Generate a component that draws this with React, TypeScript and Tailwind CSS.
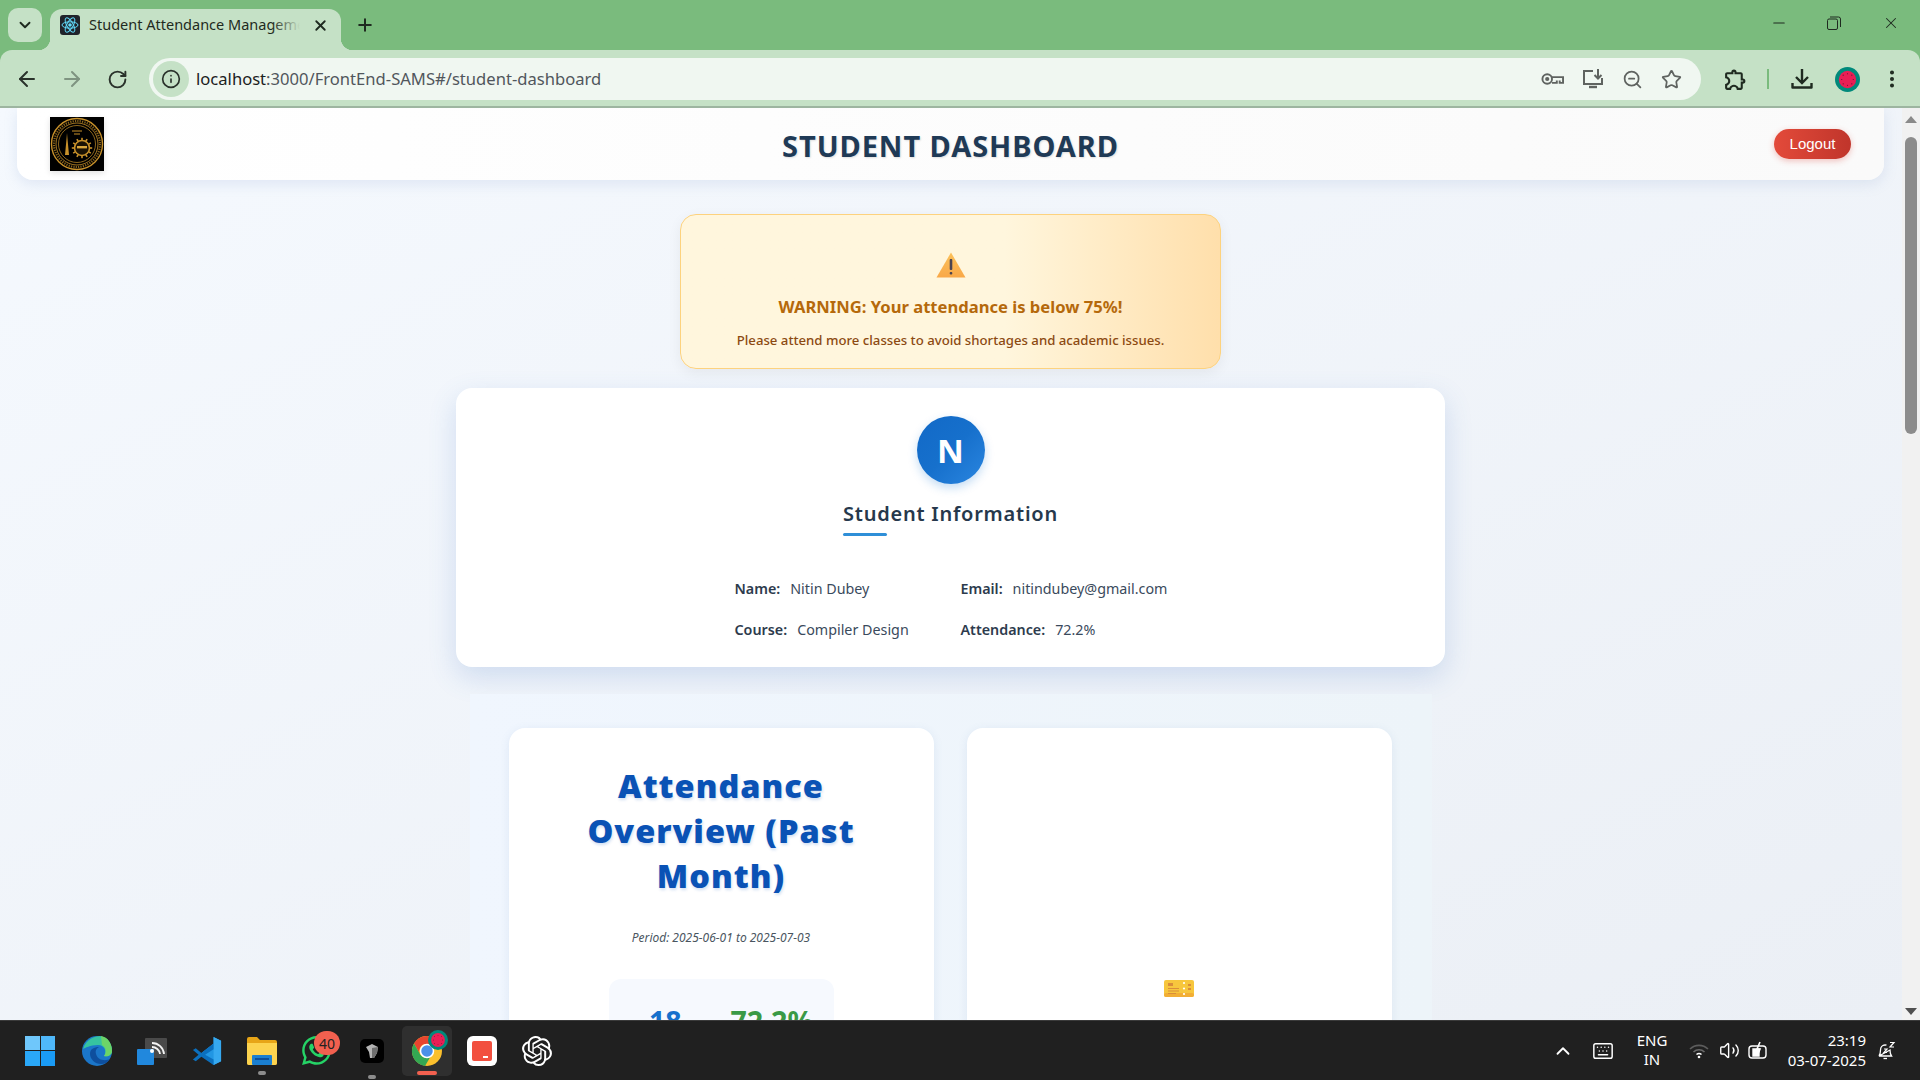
import {
  ArrowLeft,
  ArrowRight,
  ChevronDown,
  ChevronUp,
  EllipsisVertical,
  Info,
  Keyboard,
  Minus,
  Plus,
  RotateCw,
  Star,
  Volume2,
  X,
  ZoomOut,
} from "lucide-react";
import { FaWhatsapp } from "react-icons/fa";
import { MdOutlineExtension } from "react-icons/md";
import { SiOpenai } from "react-icons/si";

function ReactFavicon() {
  return (
    <svg viewBox="0 0 20 20" className="w-5 h-5 rounded-[3px] bg-[#20232a]">
      <circle cx="10" cy="10" r="1.8" fill="#61dafb" />
      <g fill="none" stroke="#61dafb" strokeWidth="1">
        <ellipse cx="10" cy="10" rx="8" ry="3.2" />
        <ellipse cx="10" cy="10" rx="8" ry="3.2" transform="rotate(60 10 10)" />
        <ellipse cx="10" cy="10" rx="8" ry="3.2" transform="rotate(120 10 10)" />
      </g>
    </svg>
  );
}

function KeyIcon() {
  return (
    <svg viewBox="0 0 24 14" className="w-[23px] h-[14px]" fill="none" stroke="#5f6360" strokeWidth="2">
      <circle cx="6.5" cy="7" r="5" />
      <circle cx="6.5" cy="7" r="1.2" fill="#5f6360" />
      <path d="M11.5 5H23V11H19.5V8.5M16.5 8.5V11H11.5" />
    </svg>
  );
}

function MonitorIcon() {
  return (
    <svg viewBox="0 0 22 22" className="w-[22px] h-[22px]" fill="none" stroke="#5f6360" strokeWidth="2">
      <path d="M11 3H2V16H20V10" />
      <path d="M7 19H15" strokeWidth="2.4" />
      <path d="M16 1V10M12.5 7L16 10.5L19.5 7" />
    </svg>
  );
}

function RestoreIcon() {
  return (
    <svg viewBox="0 0 14 14" className="w-[14px] h-[14px]" fill="none" stroke="#1f2a20" strokeWidth="1">
      <rect x="0.5" y="3" width="10" height="10.5" rx="1.5" />
      <path d="M3 1H11.5A2 2 0 0 1 13.5 3V11" />
    </svg>
  );
}

function DownloadIcon() {
  return (
    <svg viewBox="0 0 22 22" className="w-[22px] h-[22px]" fill="none" stroke="#1f2a20" strokeWidth="2.4">
      <path d="M11 1V14M5 9L11 15L17 9" />
      <path d="M1.5 15V19.5H20.5V15" strokeLinejoin="round" />
    </svg>
  );
}

function Watermelon({ size }: { size: string }) {
  return (
    <svg viewBox="0 0 26 26" className={size}>
      <circle cx="13" cy="13" r="13" fill="#00897b" />
      <circle cx="13" cy="13" r="9" fill="#e91e55" />
      <g fill="#5d1230">
        <circle cx="13" cy="7" r="0.6" />
        <circle cx="19" cy="13" r="0.6" />
        <circle cx="13" cy="19" r="0.6" />
        <circle cx="7" cy="13" r="0.6" />
        <circle cx="17.5" cy="8.5" r="0.6" />
        <circle cx="8.5" cy="8.5" r="0.6" />
        <circle cx="17.5" cy="17.5" r="0.6" />
        <circle cx="8.5" cy="17.5" r="0.6" />
      </g>
    </svg>
  );
}

function CollegeLogo() {
  const teeth = Array.from({ length: 12 }, (_, i) => i * 30);
  return (
    <svg viewBox="0 0 54 54" className="w-[54px] h-[54px] bg-black shadow-[0_2px_6px_rgba(0,0,0,0.12)]">
      <g fill="none" stroke="#c8912a">
        <ellipse cx="27" cy="27" rx="25.5" ry="25.5" strokeWidth="1.4" />
        <ellipse cx="27" cy="27" rx="21" ry="21" strokeWidth="0.8" />
        <ellipse cx="27" cy="27" rx="23" ry="23" strokeWidth="2.2" strokeDasharray="1.2 1.2" opacity="0.7" />
        <ellipse cx="27" cy="27" rx="18.5" ry="18.5" strokeWidth="1" opacity="0.7" />
      </g>
      <path d="M15 38L16.5 22L17 16L17.5 22L19 38Z" fill="#c8912a" />
      <circle cx="32" cy="31" r="7.5" fill="#1a1204" stroke="#c8912a" strokeWidth="1.6" />
      {teeth.map((deg) => (
        <rect key={deg} x="31.2" y="20.8" width="1.6" height="2.4" fill="#c8912a" transform={`rotate(${deg} 32 31)`} />
      ))}
      <rect x="27" y="29" width="10" height="2.4" fill="#d9a63c" />
      <path d="M22 14H32M24 17H30" stroke="#c8912a" strokeWidth="1" />
    </svg>
  );
}

function WarningIcon() {
  return (
    <svg viewBox="0 0 30 26" className="w-[30px] h-[26px]">
      <defs>
        <linearGradient id="warn" x1="0" y1="0" x2="0" y2="1">
          <stop offset="0" stopColor="#fbc15a" />
          <stop offset="1" stopColor="#f9a848" />
        </linearGradient>
      </defs>
      <path d="M15 0.5L29.5 25.5H0.5Z" fill="url(#warn)" />
      <rect x="13.7" y="7" width="2.6" height="11" rx="1" fill="#4a4350" />
      <rect x="13.7" y="20" width="2.6" height="2.6" rx="1" fill="#4a4350" />
    </svg>
  );
}

function TicketIcon() {
  return (
    <svg viewBox="0 0 30 17" className="w-[30px] h-[17px]">
      <path d="M2 0H28A2 2 0 0 1 30 2V15A2 2 0 0 1 28 17H2A2 2 0 0 1 0 15V2A2 2 0 0 1 2 0Z" fill="#f7c63d" />
      <rect x="0" y="13" width="30" height="4" rx="2" fill="#f2ae35" />
      <circle cx="20" cy="3" r="1.1" fill="#fff" />
      <circle cx="20" cy="8.5" r="1.1" fill="#fff" />
      <circle cx="20" cy="14" r="1.1" fill="#fff" />
      <rect x="4" y="3" width="5" height="3" fill="#d98d3a" />
      <path d="M4 8.5H15M4 11H15M4 13.5H12" stroke="#d98d3a" strokeWidth="1" />
      <path d="M24 5H27M24 9H27" stroke="#d98d3a" strokeWidth="2" />
    </svg>
  );
}

function TaskbarIcons() {
  return (
    <div className="flex items-center pl-[11px] h-full">
      <div className="w-[58px] flex justify-center">
        <div className="grid grid-cols-2 gap-[1px] w-[30px] h-[30px]">
          <div className="bg-[#6fc7fb]" />
          <div className="bg-[#4fb8fa]" />
          <div className="bg-[#2aa8f8]" />
          <div className="bg-[#1a9bf5]" />
        </div>
      </div>
      <div className="w-[55px] flex justify-center">
        <svg viewBox="0 0 32 32" className="w-8 h-8">
          <circle cx="16" cy="16" r="15" fill="#1b76c9" />
          <path d="M2 14C5 4 14 1 19 1C27 2 31 9 31 16C31 20 27 22 23 21C26 17 24 10 17 10C9 10 4 13 2 14Z" fill="#36c3a0" />
          <path d="M20 1C27 2 31 9 31 16C31 20 27 22 23 21C26 17 25 12 21 10Z" fill="#6cd468" />
          <path d="M9 19C9 24 14 29 20 29C24 29 27 27 29 24C25 26 17 26 15 19C14 15 16 13 18 12C13 12 9 14 9 19Z" fill="#0e4f9e" />
        </svg>
      </div>
      <div className="w-[55px] flex justify-center">
        <svg viewBox="0 0 30 30" className="w-[30px] h-[30px]">
          <rect x="8" y="2" width="22" height="20" rx="1" fill="#4a4a4a" />
          <path d="M15 7A12 12 0 0 1 27 18M15 11A8 8 0 0 1 23 18" fill="none" stroke="#f4f4f4" strokeWidth="1.8" />
          <rect x="0" y="13" width="17" height="16" rx="1" fill="#2188dd" />
          <circle cx="15" cy="15" r="2" fill="#fff" />
        </svg>
      </div>
      <div className="w-[55px] flex justify-center">
        <svg viewBox="0 0 32 32" className="w-[30px] h-[30px]">
          <path d="M23 1L31 5V27L23 31L10 18L23 8Z" fill="#2196e3" />
          <path d="M23 1V31L31 27V5Z" fill="#36a9f0" />
          <path d="M23 8L10 18L4 13L1 15L7 20L1 25L4 27L10 22L23 31V25L14 20L23 14Z" fill="#0b6fbd" />
        </svg>
      </div>
      <div className="w-[55px] flex justify-center relative">
        <svg viewBox="0 0 32 32" className="w-[32px] h-[32px]">
          <path d="M1 4A2 2 0 0 1 3 2H11L14 5H29A2 2 0 0 1 31 7V28A2 2 0 0 1 29 30H3A2 2 0 0 1 1 28Z" fill="#e7a517" />
          <path d="M1 8H31V28A2 2 0 0 1 29 30H3A2 2 0 0 1 1 28Z" fill="#fcd34f" />
          <rect x="6" y="20" width="20" height="10" rx="1" fill="#1b7fd0" />
          <rect x="9" y="23" width="14" height="2" fill="#0b4f9a" />
        </svg>
        <div className="absolute left-[24px] top-[36px] w-[8px] h-[4px] rounded-full bg-[#8d8d8d]" />
      </div>
      <div className="w-[55px] flex justify-center relative">
        <FaWhatsapp className="w-[33px] h-[33px] text-[#25d366]" />
        <div className="absolute left-[25px] top-[-3px] w-[26px] h-[24px] rounded-full bg-[#f2604f] flex items-center justify-center text-[14px] text-[#222]">
          40
        </div>
      </div>
      <div className="w-[55px] flex justify-center relative">
        <svg viewBox="0 0 24 24" className="w-[24px] h-[24px]">
          <rect width="24" height="24" rx="5" fill="#000" />
          <path d="M6 8L12 5L18 8L17 14L14 19H10L9 13Z" fill="#b4b4b4" />
          <path d="M12 9L18 8L17 14L14 19H12Z" fill="#6e6e6e" />
        </svg>
        <div className="absolute left-[24px] top-[36px] w-[8px] h-[4px] rounded-full bg-[#8d8d8d]" />
      </div>
      <div className="w-[50px] h-[50px] mx-[2.5px] flex justify-center items-center relative rounded-[5px] bg-[#2f2f2f]">
        <svg viewBox="0 0 32 32" className="w-[32px] h-[32px]">
          <circle cx="16" cy="16" r="15" fill="#fbc02d" />
          <path d="M16 1A15 15 0 0 0 3 8.5L9.5 20A7 7 0 0 1 16 9H29A15 15 0 0 0 16 1Z" fill="#e8452f" />
          <path d="M3 8.5A15 15 0 0 0 14 31L20.5 20A7 7 0 0 1 9.5 20Z" fill="#34a853" />
          <circle cx="16" cy="16" r="6.5" fill="#4a90e8" stroke="#fff" strokeWidth="1.5" />
        </svg>
        <div className="absolute right-[4px] top-[4px]">
          <Watermelon size="w-[20px] h-[20px]" />
        </div>
        <div className="absolute left-[15px] bottom-[1px] w-[20px] h-[4px] rounded-full bg-[#f2604f]" />
      </div>
      <div className="w-[55px] flex justify-center">
        <div className="w-[30px] h-[30px] rounded-[6px] bg-white flex items-center justify-center">
          <div className="w-[20px] h-[20px] rounded-[2px] bg-[#f2503f] relative">
            <div className="absolute right-[4px] bottom-[3px] w-[5px] h-[1.5px] bg-white" />
          </div>
        </div>
      </div>
      <div className="w-[55px] flex justify-center">
        <SiOpenai className="w-[30px] h-[30px] text-white" />
      </div>
    </div>
  );
}

function TrayIcons() {
  return (
    <div className="flex items-center h-full text-white">
      <ChevronUp className="w-[22px] h-[22px] text-white mr-[18px]" strokeWidth={2} />
      <Keyboard className="w-[22px] h-[22px] text-white mr-[18px]" strokeWidth={1.6} />
      <div className="w-[40px] text-center text-[15px] leading-[19px] mr-[17px] mt-[-1px]">
        <div>ENG</div>
        <div>IN</div>
      </div>
      <svg viewBox="0 0 20 16" className="w-[20px] h-[16px] mr-[10px]" fill="none" strokeWidth="1.6">
        <path d="M1 6A13 13 0 0 1 19 6" stroke="#5c5c5c" />
        <path d="M4.5 9A8 8 0 0 1 15.5 9" stroke="#6a6a6a" />
        <path d="M7.5 11.5A4 4 0 0 1 12.5 11.5" stroke="#fff" />
        <circle cx="10" cy="14" r="1.3" fill="#fff" stroke="none" />
      </svg>
      <Volume2 className="w-[21px] h-[21px] text-white mr-[8px]" strokeWidth={1.6} />
      <svg viewBox="0 0 20 20" className="w-[20px] h-[20px] mr-[14px]" fill="none" stroke="#fff" strokeWidth="1.4">
        <rect x="1" y="5" width="17" height="12" rx="3" />
        <path d="M5 8H11V15H5Z" fill="#fff" />
        <path d="M12 1L9 8H12L10 13" strokeWidth="1.6" />
      </svg>
      <div className="w-[84px] text-right text-[15px] leading-[20px] mr-[10px] mt-[-2px]">
        <div>23:19</div>
        <div>03-07-2025</div>
      </div>
      <svg viewBox="0 0 20 20" className="w-[20px] h-[20px] mr-[24px]" fill="none" stroke="#fff" strokeWidth="1.3">
        <path d="M3 15C4.5 13 4.5 12 4.5 9C4.5 6 6.5 4 9 4C9.5 4 10 4 10.5 4.2M14 9C14 12 14 13 15.5 15H3Z" />
        <path d="M7.5 17.5H11" />
        <path d="M8 8H11L8 11.5H11M14 1.5H18L14 6H18" strokeWidth="1.2" />
      </svg>
    </div>
  );
}

function InfoRow({ label, value }: { label: string; value: string }) {
  return (
    <div className="flex text-[14.3px] text-[#3a4a5c] leading-[20px]">
      <span className="font-semibold text-[#2d3b4d] mr-[10px]">{label}</span>
      <span>{value}</span>
    </div>
  );
}

export default function App() {
  return (
    <div className="w-[1920px] h-[1080px] flex flex-col overflow-hidden font-['Noto_Sans',sans-serif]">
      {/* browser chrome */}
      <div className="bg-[#7abb7d] shrink-0">
        <div className="h-[50px] flex items-end relative">
          <div className="ml-[8px] mb-[8px] w-[34px] h-[34px] rounded-[10px] bg-[#c5e1c6] flex items-center justify-center">
            <ChevronDown className="w-[18px] h-[18px] text-[#1f2a20]" strokeWidth={2.5} />
          </div>
          <div className="relative ml-[8px] w-[291px] h-[41px] bg-[#c5e1c6] rounded-t-[12px] flex items-center pl-[10px] pr-[12px] pb-[9px]">
            <div className="absolute left-[-12px] bottom-0 w-[12px] h-[12px] bg-[radial-gradient(circle_at_0_0,transparent_12px,#c5e1c6_12.5px)]" />
            <div className="absolute right-[-12px] bottom-0 w-[12px] h-[12px] bg-[radial-gradient(circle_at_100%_0,transparent_12px,#c5e1c6_12.5px)]" />
            <ReactFavicon />
            <div className="relative ml-[9px] w-[211px] overflow-hidden whitespace-nowrap text-[14.5px] text-[#1f2a20]">
              Student Attendance Management System
              <div className="absolute right-0 top-0 h-full w-[28px] bg-gradient-to-r from-transparent to-[#c5e1c6]" />
            </div>
            <X className="ml-auto w-[17px] h-[17px] text-[#1f2a20]" strokeWidth={2.6} />
          </div>
          <Plus className="ml-[14px] mb-[15px] w-[20px] h-[20px] text-[#1f2a20]" strokeWidth={2.4} />
          <div className="ml-auto mb-[18px] flex items-center pr-[20px]">
            <Minus className="w-[18px] h-[18px] text-[#1f2a20]" strokeWidth={1.4} />
            <div className="ml-[39px] flex">
              <RestoreIcon />
            </div>
            <X className="ml-[41px] w-[18px] h-[18px] text-[#1f2a20]" strokeWidth={1.4} />
          </div>
        </div>
        <div className="h-[58px] bg-[#c5e1c6] rounded-t-[12px] border-b-2 border-[#9db5a0] flex items-center pt-[2px]">
          <ArrowLeft className="ml-[15px] w-[24px] h-[24px] text-[#2a322b]" strokeWidth={2} />
          <ArrowRight className="ml-[21px] w-[24px] h-[24px] text-[#7f9481]" strokeWidth={2} />
          <RotateCw className="ml-[23px] w-[21px] h-[21px] text-[#2a322b]" strokeWidth={2.2} />
          <div className="ml-[21px] w-[1552px] h-[42px] rounded-full bg-[#f0f7f1] flex items-center pl-[4px] pr-[18px]">
            <div className="w-[36px] h-[36px] rounded-full bg-[#c5e1c6] flex items-center justify-center">
              <Info className="w-[20px] h-[20px] text-[#2a322b]" strokeWidth={2} />
            </div>
            <div className="ml-[7px] text-[16.6px] text-[#50565c] whitespace-nowrap">
              <span className="text-[#1c211d]">localhost</span>:3000/FrontEnd-SAMS#/student-dashboard
            </div>
            <div className="ml-auto flex items-center gap-[18px] mr-[1px]">
              <KeyIcon />
              <MonitorIcon />
              <ZoomOut className="w-[21px] h-[21px] text-[#5f6360]" strokeWidth={2} />
              <Star className="w-[21px] h-[21px] text-[#5f6360]" strokeWidth={2} />
            </div>
          </div>
          <MdOutlineExtension className="ml-[22px] w-[25px] h-[25px] text-[#1f2a20]" />
          <div className="ml-[19px] w-[2px] h-[20px] bg-[#7abb7d]" />
          <div className="ml-[22px]">
            <DownloadIcon />
          </div>
          <div className="ml-[22px]">
            <Watermelon size="w-[25px] h-[25px]" />
          </div>
          <EllipsisVertical className="ml-[21px] w-[22px] h-[22px] text-[#1f2a20]" strokeWidth={2.4} />
        </div>
      </div>

      {/* page area */}
      <div className="flex-1 min-h-0 flex bg-[#eff3f8]">
        <div className="flex-1 min-w-0 overflow-hidden bg-gradient-to-br from-[#f5f9fe] to-[#ebeff5] flex flex-col items-center pr-[1px]">
          <header className="shrink-0 w-[1867px] h-[72px] bg-gradient-to-r from-white to-[#fafafa] rounded-b-2xl shadow-[0_4px_14px_rgba(120,150,200,0.18)] grid grid-cols-[1fr_auto_1fr] items-center px-[33px]">
            <div className="justify-self-start">
              <CollegeLogo />
            </div>
            <h1 className="text-[29px] font-bold tracking-[0.95px] text-[#1f3a56] mt-[3px] [text-shadow:1px_1px_2px_rgba(0,0,0,0.12)]">
              STUDENT DASHBOARD
            </h1>
            <button className="justify-self-end w-[77px] h-[30px] rounded-full bg-gradient-to-r from-[#e34a3a] to-[#c0352b] text-white text-[15px] font-['Liberation_Sans',sans-serif] shadow-[0_2px_6px_rgba(220,60,50,0.3)]">
              Logout
            </button>
          </header>

          <div className="shrink-0 mt-[34px] w-[541px] h-[155px] rounded-2xl border border-[#fdd27e] bg-gradient-to-r from-[#fff6dd] via-[#fff6dd] via-60% to-[#ffdfab] shadow-[0_4px_14px_rgba(0,0,0,0.06)] flex flex-col items-center pt-[37px]">
            <WarningIcon />
            <div className="mt-[17px] text-[16.6px] leading-[24px] font-bold text-[#b5690b]">
              WARNING: Your attendance is below 75%!
            </div>
            <div className="mt-[12px] text-[13.2px] leading-[18px] font-medium text-[#8c4a12]">
              Please attend more classes to avoid shortages and academic issues.
            </div>
          </div>

          <section className="shrink-0 mt-[19px] w-[989px] h-[279px] rounded-2xl bg-white shadow-[0_10px_28px_rgba(70,120,200,0.2)] flex flex-col items-center pt-[28px]">
            <div className="w-[68px] h-[68px] rounded-full bg-gradient-to-br from-[#1269c7] via-[#1670cc] to-[#2a86e0] shadow-[0_4px_10px_rgba(25,118,210,0.25)] flex items-center justify-center text-white text-[33px] font-bold pt-[2px]">
              N
            </div>
            <div className="mt-[15px] relative">
              <h2 className="text-[20px] leading-[30px] font-semibold tracking-[0.75px] text-[#26384c]">
                Student Information
              </h2>
              <div className="mt-[4px] w-[44px] h-[3px] rounded-full bg-[#2f8fd8]" />
            </div>
            <div className="mt-[43px] w-[432px] grid grid-cols-[226px_1fr] gap-y-[21px]">
              <InfoRow label="Name:" value="Nitin Dubey" />
              <InfoRow label="Email:" value="nitindubey@gmail.com" />
              <InfoRow label="Course:" value="Compiler Design" />
              <InfoRow label="Attendance:" value="72.2%" />
            </div>
          </section>

          <section className="shrink-0 mt-[27px] w-[962px] h-[400px] bg-gradient-to-r from-[#f0f6fe] to-[#edf4f9] pt-[34px] pl-[39px] flex gap-[33px]">
            <div className="w-[425px] h-[500px] rounded-2xl bg-white shadow-[0_2px_10px_rgba(90,130,190,0.12)] flex flex-col items-center pt-[35px]">
              <h2 className="w-[300px] text-center text-[32.5px] leading-[45px] font-black tracking-[1px] text-[#0a52b5] [text-shadow:1px_2px_3px_rgba(10,82,181,0.18)]">
                Attendance Overview (Past Month)
              </h2>
              <div className="mt-[31px] text-[12px] leading-[18px] italic text-[#4a5560]">
                Period: 2025-06-01 to 2025-07-03
              </div>
              <div className="mt-[32px] w-[225px] h-[100px] rounded-xl bg-[#f6f9fe] flex justify-center gap-[49px] pt-[22px] pl-[20px] text-[28.5px] leading-[40px] font-bold">
                <span className="text-[#1670cc]">18</span>
                <span className="text-[#3a9a46]">72.2%</span>
              </div>
            </div>
            <div className="w-[425px] h-[500px] rounded-2xl bg-white shadow-[0_2px_10px_rgba(90,130,190,0.12)] flex flex-col items-center pt-[252px]">
              <TicketIcon />
            </div>
          </section>
        </div>

        {/* scrollbar */}
        <div className="w-[18px] shrink-0 bg-[#f1f1f1] flex flex-col items-center pt-[8px] pb-[5px]">
          <div className="w-0 h-0 border-x-[6px] border-x-transparent border-b-[7px] border-b-[#8a8a8a]" />
          <div className="mt-[14px] w-[12px] h-[297px] rounded-full bg-[#8c8c8c]" />
          <div className="mt-auto w-0 h-0 border-x-[6px] border-x-transparent border-t-[7px] border-t-[#505050]" />
        </div>
      </div>

      {/* windows taskbar */}
      <footer className="h-[60px] shrink-0 bg-[#202020] border-t border-[#3a3a3a] flex items-center justify-between">
        <TaskbarIcons />
        <TrayIcons />
      </footer>
    </div>
  );
}
